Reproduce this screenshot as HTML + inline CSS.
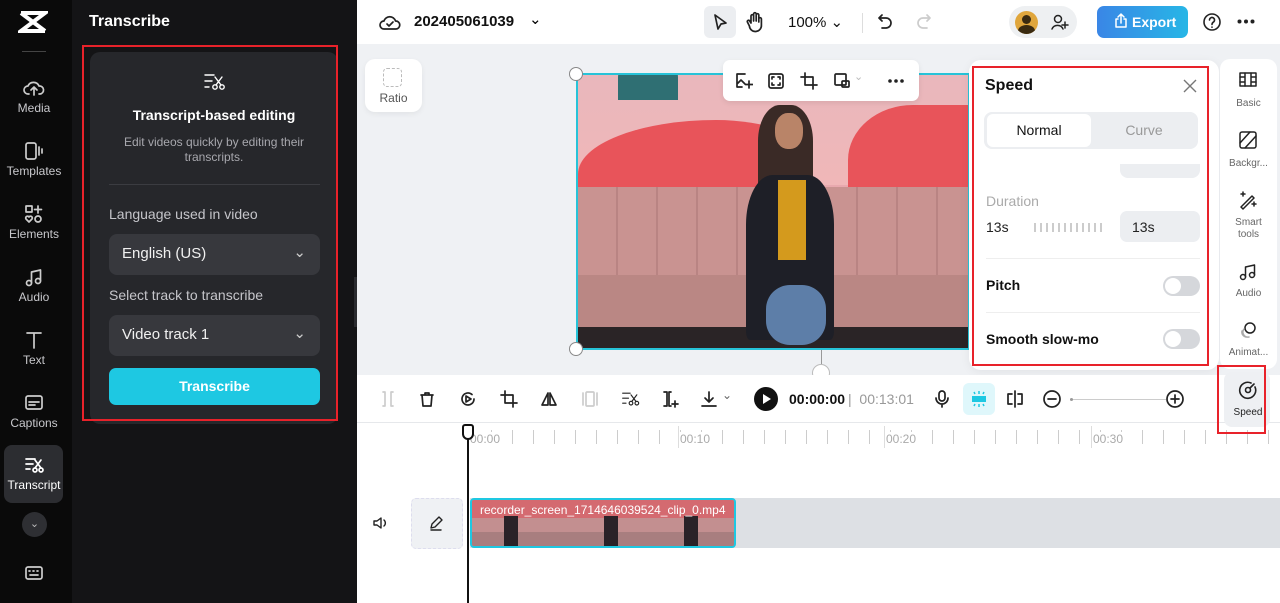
<!DOCTYPE html>
<html><head><meta charset="utf-8"><style>
*{box-sizing:border-box;margin:0;padding:0}
body{width:1280px;height:603px;overflow:hidden;font-family:"Liberation Sans",sans-serif;background:#fff;position:relative}
.abs{position:absolute}
.nav{left:0;top:0;width:72px;height:603px;background:#0a0a0a}
.ni{position:absolute;left:0;width:68px;text-align:center;color:#c8c8cc;font-size:12px}
.ni svg{display:block;margin:0 auto 3px}
.panel{left:72px;top:0;width:285px;height:603px;background:#141416}
.card{left:90px;top:52px;width:248px;height:372px;background:#26272b;border-radius:10px}
.sel{position:absolute;left:19px;width:211px;height:41px;background:#37383d;border-radius:8px;color:#f0f0f0;font-size:15px;padding:11px 13px}
.lbl{position:absolute;left:19px;color:#c5c5ca;font-size:14px}
.top{left:357px;top:0;width:923px;height:44px;background:#fff}
.canvas{left:357px;top:44px;width:923px;height:331px;background:#eff1f4}
.tb{left:357px;top:375px;width:923px;height:48px;background:#fff;border-bottom:1px solid #e6e8eb}
.ic{stroke:#222;fill:none;stroke-width:1.7;stroke-linecap:round;stroke-linejoin:round}
.red{position:absolute;border:2px solid #e8222a;z-index:5}
</style></head><body>
<div class="abs nav">
 <svg class="abs" style="left:18px;top:10px" width="30" height="24" viewBox="0 0 30 24"><path d="M3 3h24L3 21h24" stroke="#fff" stroke-width="4" fill="none"/><path d="M3 3L27 21" stroke="#fff" stroke-width="4"/></svg>
 <div class="abs" style="left:22px;top:51px;width:24px;height:1px;background:#444"></div>
 <div class="ni" style="top:78px"><svg width="22" height="20" viewBox="0 0 22 20" class="ic" style="stroke:#ccc"><path d="M6 16H5a4 4 0 010-8 6 6 0 0111 0 4 4 0 011 8h-1M11 17V9M8 12l3-3 3 3"/></svg>Media</div>
 <div class="ni" style="top:141px"><svg width="22" height="20" viewBox="0 0 22 20" class="ic" style="stroke:#ccc"><rect x="3" y="2" width="10" height="16" rx="2"/><path d="M16 6v8M19 8v4"/></svg>Templates</div>
 <div class="ni" style="top:204px"><svg width="22" height="20" viewBox="0 0 22 20" class="ic" style="stroke:#ccc"><rect x="3" y="2" width="6" height="6"/><path d="M15 2v7M11.5 5.5h7"/><circle cx="15" cy="15" r="3"/><path d="M6 18l-3-3a1.8 1.8 0 013-2 1.8 1.8 0 013 2z"/></svg>Elements</div>
 <div class="ni" style="top:267px"><svg width="22" height="20" viewBox="0 0 22 20" class="ic" style="stroke:#ccc"><circle cx="6" cy="16" r="2.5"/><circle cx="15" cy="14" r="2.5"/><path d="M8.5 16V5l9-2v11"/></svg>Audio</div>
 <div class="ni" style="top:330px"><svg width="22" height="20" viewBox="0 0 22 20" class="ic" style="stroke:#ccc"><path d="M4 3h14M11 3v15"/></svg>Text</div>
 <div class="ni" style="top:393px"><svg width="22" height="20" viewBox="0 0 22 20" class="ic" style="stroke:#ccc"><rect x="3" y="3" width="16" height="13" rx="2"/><path d="M6 9h10M6 12h6"/></svg>Captions</div>
 <div class="abs" style="left:4px;top:445px;width:59px;height:58px;background:#2c2d31;border-radius:8px"></div>
 <div class="ni" style="top:455px;color:#fff"><svg width="22" height="20" viewBox="0 0 22 20" class="ic" style="stroke:#fff"><path d="M3 4h9M3 9h7M3 14h4"/><circle cx="12" cy="15" r="2"/><circle cx="18" cy="15" r="2"/><path d="M12 5l6 8M18 5l-6 8"/></svg>Transcript</div>
 <div class="abs" style="left:22px;top:512px;width:25px;height:25px;border-radius:50%;background:#2e2f33;color:#bbb;font-size:11px;text-align:center;line-height:25px">⌄</div>
 <svg class="abs ic" style="left:24px;top:564px;stroke:#ccc" width="20" height="18" viewBox="0 0 20 18"><rect x="2" y="3" width="16" height="12" rx="2"/><path d="M5 7h1M9 7h1M13 7h1M6 11h8"/></svg>
</div>
<div class="abs panel">
 <div class="abs" style="left:17px;top:13px;color:#fff;font-size:16px;font-weight:bold">Transcribe</div>
</div>
<div class="abs card">
 <svg class="abs ic" style="left:113px;top:20px;stroke:#fff;stroke-width:1.4" width="24" height="20" viewBox="0 0 24 20"><path d="M2 3h9M2 9h7M2 15h4"/><circle cx="12" cy="15" r="2.2"/><circle cx="19" cy="15" r="2.2"/><path d="M12 5l6 8M19 5l-6 8"/></svg>
 <div class="abs" style="left:0;width:248px;top:55px;text-align:center;color:#fff;font-weight:bold;font-size:14px">Transcript-based editing</div>
 <div class="abs" style="left:20px;width:208px;top:83px;text-align:center;color:#a8a8ae;font-size:12px;line-height:15px">Edit videos quickly by editing their transcripts.</div>
 <div class="abs" style="left:19px;top:132px;width:211px;height:1px;background:#3b3c41"></div>
 <div class="lbl" style="top:154px">Language used in video</div>
 <div class="sel" style="top:182px">English (US)<span style="position:absolute;right:14px;top:9px;color:#ccc">⌄</span></div>
 <div class="lbl" style="top:235px">Select track to transcribe</div>
 <div class="sel" style="top:263px">Video track 1<span style="position:absolute;right:14px;top:9px;color:#ccc">⌄</span></div>
 <div class="abs" style="left:19px;top:316px;width:211px;height:37px;background:#1ec8e2;border-radius:7px;color:#fff;font-weight:bold;font-size:14px;text-align:center;line-height:37px">Transcribe</div>
</div>
<div class="red" style="left:82px;top:45px;width:256px;height:376px"></div>
<div class="abs" style="left:354px;top:277px;width:9px;height:50px;background:#2a2b2f;border-radius:0 5px 5px 0"></div>

<div class="abs top">
 <svg class="abs ic" style="left:22px;top:12px" width="22" height="20" viewBox="0 0 22 20"><path d="M6 17H5a4 4 0 010-8 6 6 0 0111.5 0 4 4 0 01.5 8H6z"/><path d="M8 12l2 2 4-4"/></svg>
 <div class="abs" style="left:57px;top:13px;font-size:15px;font-weight:bold;color:#111">202405061039</div>
 <div class="abs" style="left:172px;top:10px;font-size:15px">⌄</div>
 <div class="abs" style="left:347px;top:6px;width:32px;height:32px;background:#eceef1;border-radius:6px"></div>
 <svg class="abs ic" style="left:354px;top:12px" width="18" height="20" viewBox="0 0 18 20"><path d="M4 3l11 8-5 1-3 5z"/></svg>
 <svg class="abs ic" style="left:388px;top:11px" width="20" height="22" viewBox="0 0 20 22"><path d="M6 12V5a1.3 1.3 0 012.6 0v5V3a1.3 1.3 0 012.6 0v7V4a1.3 1.3 0 012.6 0v7-3a1.3 1.3 0 012.6 0v6a6 6 0 01-12 1l-2-4a1.3 1.3 0 012-1.5z"/></svg>
 <div class="abs" style="left:431px;top:13px;font-size:15px;color:#111">100% ⌄</div>
 <div class="abs" style="left:505px;top:13px;width:1px;height:20px;background:#ddd"></div>
 <svg class="abs ic" style="left:519px;top:12px" width="18" height="20" viewBox="0 0 18 20"><path d="M6 3L3 6l3 3M3 6h7a5 5 0 010 10H6"/></svg>
 <svg class="abs ic" style="left:558px;top:12px;stroke:#ccc" width="18" height="20" viewBox="0 0 18 20"><path d="M12 3l3 3-3 3M15 6H8a5 5 0 000 10h4"/></svg>
 <div class="abs" style="left:652px;top:6px;width:68px;height:32px;background:#eef0f2;border-radius:16px"></div>
 <div class="abs" style="left:658px;top:11px;width:23px;height:23px;background:#e0a63c;border-radius:50%;overflow:hidden"><div style="position:absolute;left:7px;top:4px;width:9px;height:9px;border-radius:50%;background:#3a2a10"></div><div style="position:absolute;left:3px;top:14px;width:17px;height:12px;border-radius:50%;background:#3a2a10"></div></div>
 <svg class="abs ic" style="left:694px;top:12px;stroke-width:1.5" width="18" height="20" viewBox="0 0 18 20"><circle cx="7" cy="7" r="3.5"/><path d="M1 17a6 6 0 0111 0M14 10v6M11 13h6"/></svg>
 <div class="abs" style="left:740px;top:6px;width:91px;height:32px;background:linear-gradient(90deg,#3a86e6,#27b6e6);border-radius:7px;color:#fff;font-weight:bold;font-size:14px;line-height:32px;padding-left:35px">Export</div>
 <svg class="abs ic" style="left:756px;top:13px;stroke:#fff;stroke-width:1.5" width="16" height="16" viewBox="0 0 16 16"><path d="M5 6H3v8h10V6h-2M8 10V2M5 4l3-3 3 3"/></svg>
 <svg class="abs ic" style="left:845px;top:12px;stroke-width:1.6" width="20" height="20" viewBox="0 0 20 20"><circle cx="10" cy="10" r="8"/><path d="M7.5 8a2.5 2.5 0 114 2c-1 .7-1.5 1-1.5 2.5M10 15v.2"/></svg>
 <svg class="abs" style="left:880px;top:19px" width="18" height="5" viewBox="0 0 18 5"><circle cx="2.5" cy="2.5" r="2" fill="#222"/><circle cx="9" cy="2.5" r="2" fill="#222"/><circle cx="15.5" cy="2.5" r="2" fill="#222"/></svg>
</div>

<div class="abs canvas">
 <div class="abs" style="left:8px;top:15px;width:57px;height:53px;background:#fff;border-radius:10px;box-shadow:0 2px 6px rgba(0,0,0,.06)"></div>
 <div class="abs" style="left:26px;top:24px;width:19px;height:19px;border:1.5px dashed #bbb;border-radius:4px"></div>
 <div class="abs" style="left:8px;top:47px;width:57px;text-align:center;font-size:12px;color:#555">Ratio</div>
 <!-- video -->
 <div class="abs" style="left:219px;top:29px;width:394px;height:277px;border:2px solid #27c3d8;overflow:hidden;background:#e8a9ae">
  <div class="abs" style="left:0;top:0;width:394px;height:110px;background:linear-gradient(180deg,#e9b7bc,#f0b7b8)"></div>
  <div class="abs" style="left:40px;top:-20px;width:60px;height:45px;border-radius:50% 50% 0 0;background:#2f6f73"></div>
  <div class="abs" style="left:0;top:45px;width:230px;height:90px;background:#e8545a;border-radius:60% 40% 0 0"></div>
  <div class="abs" style="left:270px;top:30px;width:130px;height:110px;background:#e8545a;border-radius:50% 0 0 0"></div>
  <div class="abs" style="left:0;top:112px;width:394px;height:120px;background:repeating-linear-gradient(90deg,#c99391 0 38px,#b98483 38px 40px)"></div>
  <div class="abs" style="left:0;top:200px;width:394px;height:80px;background:#ba8784"></div>
  <div class="abs" style="left:0;top:252px;width:394px;height:30px;background:#2a2426"></div>
  <div class="abs" style="left:180px;top:30px;width:55px;height:90px;background:#3a2a26;border-radius:40% 40% 10% 10%"></div>
  <div class="abs" style="left:197px;top:38px;width:28px;height:36px;background:#b98468;border-radius:45%"></div>
  <div class="abs" style="left:168px;top:100px;width:88px;height:165px;background:#1e1f27;border-radius:30% 30% 5% 5%"></div>
  <div class="abs" style="left:200px;top:105px;width:28px;height:80px;background:#d49a1d"></div>
  <div class="abs" style="left:188px;top:210px;width:60px;height:60px;background:#5d7ea8;border-radius:40%"></div>
 </div>
 <div class="abs" style="left:212px;top:23px;width:14px;height:14px;border-radius:50%;background:#fff;border:1px solid #888"></div>
 <div class="abs" style="left:212px;top:298px;width:14px;height:14px;border-radius:50%;background:#fff;border:1px solid #888"></div>
 <div class="abs" style="left:366px;top:16px;width:196px;height:41px;background:#fff;border-radius:7px;box-shadow:0 2px 6px rgba(0,0,0,.08)"></div>
 <svg class="abs ic" style="left:378px;top:28px" width="18" height="18" viewBox="0 0 18 18"><path d="M10 2H2v13h5M2 12l4-4 4 4"/><path d="M14 9v7M10.5 12.5h7"/></svg>
 <svg class="abs ic" style="left:410px;top:28px" width="18" height="18" viewBox="0 0 18 18"><rect x="2" y="2" width="14" height="14" rx="2"/><path d="M5 7V5h2M11 5h2v2M13 11v2h-2M7 13H5v-2"/></svg>
 <svg class="abs ic" style="left:443px;top:28px" width="18" height="18" viewBox="0 0 18 18"><path d="M5 1v12h12M1 5h12v12"/></svg>
 <svg class="abs ic" style="left:476px;top:28px" width="18" height="18" viewBox="0 0 18 18"><rect x="2" y="2" width="11" height="11" rx="1"/><rect x="9" y="9" width="7" height="6" rx="1"/></svg>
 <div class="abs" style="left:497px;top:26px;color:#bbb;font-size:11px">⌄</div>
 <svg class="abs" style="left:531px;top:35px" width="16" height="4" viewBox="0 0 16 4"><circle cx="2" cy="2" r="1.8" fill="#222"/><circle cx="8" cy="2" r="1.8" fill="#222"/><circle cx="14" cy="2" r="1.8" fill="#222"/></svg>
 <div class="abs" style="left:464px;top:306px;width:1px;height:14px;background:#999"></div>
 <div class="abs" style="left:455px;top:320px;width:18px;height:18px;border-radius:50%;background:#fff;border:1px solid #bbb"></div>
 <!-- speed panel -->
 <div class="abs" style="left:612px;top:16px;width:250px;height:310px;background:#fff;border-radius:12px;box-shadow:0 2px 10px rgba(0,0,0,.06)"></div>
 <div class="red" style="left:615px;top:22px;width:237px;height:300px"></div>
 <div class="abs" style="left:628px;top:33px;font-size:16px;font-weight:bold;color:#111">Speed</div>
 <svg class="abs" style="left:826px;top:35px" width="14" height="14" viewBox="0 0 14 14"><path d="M1 1l12 12M13 1L1 13" stroke="#777" stroke-width="1.4"/></svg>
 <div class="abs" style="left:627px;top:68px;width:214px;height:37px;background:#eceef1;border-radius:8px"></div>
 <div class="abs" style="left:630px;top:70px;width:104px;height:33px;background:#fff;border-radius:6px;text-align:center;line-height:33px;font-size:14px;color:#111">Normal</div>
 <div class="abs" style="left:735px;top:70px;width:104px;height:33px;text-align:center;line-height:33px;font-size:14px;color:#999">Curve</div>
 <div class="abs" style="left:763px;top:120px;width:80px;height:14px;background:#eceef1;border-radius:0 0 8px 8px"></div>
 <div class="abs" style="left:629px;top:149px;font-size:14px;color:#aaa">Duration</div>
 <div class="abs" style="left:629px;top:175px;font-size:14px;color:#222">13s</div>
 <div class="abs" style="left:677px;top:179px;width:68px;height:9px;background:repeating-linear-gradient(90deg,#ccc 0 2px,transparent 2px 6px)"></div>
 <div class="abs" style="left:763px;top:167px;width:80px;height:31px;background:#eceef1;border-radius:7px;font-size:14px;padding:8px 12px;color:#222">13s</div>
 <div class="abs" style="left:629px;top:214px;width:214px;height:1px;background:#eee"></div>
 <div class="abs" style="left:629px;top:233px;font-size:14px;font-weight:bold;color:#111">Pitch</div>
 <div class="abs" style="left:806px;top:232px;width:37px;height:20px;background:#d5d7db;border-radius:10px"><div style="position:absolute;left:2px;top:2px;width:16px;height:16px;background:#fff;border-radius:50%"></div></div>
 <div class="abs" style="left:629px;top:268px;width:214px;height:1px;background:#eee"></div>
 <div class="abs" style="left:629px;top:287px;font-size:14px;font-weight:bold;color:#111">Smooth slow-mo</div>
 <div class="abs" style="left:806px;top:285px;width:37px;height:20px;background:#d5d7db;border-radius:10px"><div style="position:absolute;left:2px;top:2px;width:16px;height:16px;background:#fff;border-radius:50%"></div></div>
 <!-- right tabs -->
 <div class="abs" style="left:863px;top:15px;width:57px;height:310px;background:#fff;border-radius:10px"></div>
 <svg class="abs ic" style="left:881px;top:27px;stroke-width:1.5" width="20" height="18" viewBox="0 0 20 18"><rect x="2" y="2" width="16" height="13"/><path d="M7 2v13M13 2v13M2 6h5M2 11h5M13 6h5M13 11h5"/></svg>
 <div class="abs" style="left:863px;top:54px;width:57px;text-align:center;font-size:10px;color:#666">Basic</div>
 <svg class="abs ic" style="left:881px;top:87px;stroke-width:1.5" width="20" height="18" viewBox="0 0 20 18"><rect x="2" y="1" width="16" height="16" rx="2"/><path d="M2 12l10-11M7 17L18 5"/></svg>
 <div class="abs" style="left:863px;top:114px;width:57px;text-align:center;font-size:10px;color:#666">Backgr...</div>
 <svg class="abs ic" style="left:881px;top:146px;stroke-width:1.5" width="20" height="20" viewBox="0 0 20 20"><path d="M3 17L14 6l2 2L5 19zM5 2v4M3 4h4M16 12v4M14 14h4"/></svg>
 <div class="abs" style="left:863px;top:173px;width:57px;text-align:center;font-size:10px;color:#666;line-height:12px">Smart<br>tools</div>
 <svg class="abs ic" style="left:881px;top:218px;stroke-width:1.5" width="20" height="20" viewBox="0 0 20 20"><circle cx="5" cy="15" r="2.5"/><circle cx="14" cy="13" r="2.5"/><path d="M7.5 15V5l9-2v10"/></svg>
 <div class="abs" style="left:863px;top:244px;width:57px;text-align:center;font-size:10px;color:#666">Audio</div>
 <svg class="abs ic" style="left:881px;top:276px;stroke-width:1.5" width="20" height="20" viewBox="0 0 20 20"><circle cx="12" cy="8" r="5"/><path d="M6 9a5 5 0 005 8M4 11a5 5 0 004 6" stroke="#aaa"/></svg>
 <div class="abs" style="left:863px;top:303px;width:57px;text-align:center;font-size:10px;color:#666">Animat...</div>
</div>

<div class="abs tb">
 <svg class="abs ic" style="left:22px;top:15px;stroke:#ccc" width="18" height="18" viewBox="0 0 18 18"><path d="M4 2h2v14H4M14 2h-2v14h2"/></svg>
 <svg class="abs ic" style="left:61px;top:15px" width="18" height="18" viewBox="0 0 18 18"><path d="M3 5h12M7 5V3h4v2M4 5l1 11h8l1-11"/></svg>
 <svg class="abs ic" style="left:102px;top:15px" width="18" height="18" viewBox="0 0 18 18"><path d="M15 9a6 6 0 11-2-4.5"/><path d="M7 6l5 3-5 3z"/></svg>
 <svg class="abs ic" style="left:143px;top:15px" width="18" height="18" viewBox="0 0 18 18"><path d="M5 1v12h12M1 5h12v12"/></svg>
 <svg class="abs ic" style="left:183px;top:15px" width="18" height="18" viewBox="0 0 18 18"><path d="M8 3L2 15h6zM10 3l6 12h-6z"/></svg>
 <svg class="abs ic" style="left:224px;top:15px;stroke:#ccc" width="18" height="18" viewBox="0 0 18 18"><rect x="5" y="2" width="8" height="14" rx="1"/><path d="M2 3v12M16 3v12"/></svg>
 <svg class="abs ic" style="left:264px;top:15px;stroke-width:1.4" width="20" height="18" viewBox="0 0 24 20"><path d="M2 3h9M2 9h7M2 15h4"/><circle cx="12" cy="15" r="2.2"/><circle cx="19" cy="15" r="2.2"/><path d="M12 5l6 8M19 5l-6 8"/></svg>
 <svg class="abs ic" style="left:304px;top:15px" width="18" height="18" viewBox="0 0 18 18"><path d="M3 2h3v14H3M10 2h-2v14h2M14 11v6M11 14h6"/></svg>
 <svg class="abs ic" style="left:343px;top:15px" width="18" height="18" viewBox="0 0 18 18"><path d="M9 2v10M5 8l4 4 4-4M2 16h14"/></svg>
 <div class="abs" style="left:365px;top:13px;font-size:12px;color:#666">⌄</div>
 <div class="abs" style="left:397px;top:12px;width:24px;height:24px;border-radius:50%;background:#111"></div>
 <div class="abs" style="left:406px;top:19px;width:0;height:0;border-left:8px solid #fff;border-top:5px solid transparent;border-bottom:5px solid transparent"></div>
 <div class="abs" style="left:432px;top:16px;font-size:14px;font-weight:bold;color:#111">00:00:00</div>
 <div class="abs" style="left:491px;top:16px;font-size:14px;color:#999">|&nbsp; 00:13:01</div>
 <svg class="abs ic" style="left:576px;top:14px" width="18" height="20" viewBox="0 0 18 20"><rect x="6" y="2" width="6" height="10" rx="3"/><path d="M3 9a6 6 0 0012 0M9 15v3"/></svg>
 <div class="abs" style="left:606px;top:8px;width:32px;height:32px;background:#dff7fb;border-radius:6px"></div>
 <svg class="abs" style="left:612px;top:14px" width="20" height="20" viewBox="0 0 20 20"><rect x="3" y="7" width="14" height="6" fill="#1ec8e2"/><path d="M10 2v3M10 15v3M5 3l1 2M15 3l-1 2M5 17l1-2M15 17l-1-2" stroke="#1ec8e2" stroke-width="1.5"/></svg>
 <svg class="abs ic" style="left:648px;top:15px" width="20" height="18" viewBox="0 0 20 18"><path d="M10 1v16M7 4H3v10h4M13 4h4v10h-4"/></svg>
 <svg class="abs ic" style="left:685px;top:14px" width="20" height="20" viewBox="0 0 20 20"><circle cx="10" cy="10" r="8"/><path d="M6 10h8"/></svg>
 <div class="abs" style="left:713px;top:24px;width:96px;height:1px;background:#ccc"></div>
 <div class="abs" style="left:713px;top:23px;width:3px;height:3px;background:#999;border-radius:50%"></div>
 <svg class="abs ic" style="left:808px;top:14px" width="20" height="20" viewBox="0 0 20 20"><circle cx="10" cy="10" r="8"/><path d="M6 10h8M10 6v8"/></svg>
</div>
<!-- speed tab on right -->
<div class="abs" style="left:1224px;top:372px;width:46px;height:55px;background:#eef0f3;border-radius:8px"></div>
<div class="red" style="left:1217px;top:365px;width:49px;height:69px"></div>
<svg class="abs ic" style="left:1238px;top:380px;stroke-width:1.6" width="20" height="20" viewBox="0 0 20 20"><path d="M17 7a8 8 0 11-4-4"/><circle cx="10" cy="10" r="2.5"/><path d="M12 8l4-4"/></svg>
<div class="abs" style="left:1220px;top:407px;width:56px;text-align:center;font-size:10px;color:#222">Speed</div>

<!-- timeline -->
<div class="abs" style="left:470px;top:430px;width:810px;height:14px;background:repeating-linear-gradient(90deg,#ccc 0 1px,transparent 1px 21px)"></div>
<div class="abs" style="left:470px;top:432px;font-size:12px;color:#aaa;background:#fff">00:00</div>
<div class="abs" style="left:678px;top:426px;width:1px;height:22px;background:#ddd"></div><div class="abs" style="left:680px;top:432px;font-size:12px;color:#aaa;background:#fff">00:10</div>
<div class="abs" style="left:884px;top:426px;width:1px;height:22px;background:#ddd"></div><div class="abs" style="left:886px;top:432px;font-size:12px;color:#aaa;background:#fff">00:20</div>
<div class="abs" style="left:1091px;top:426px;width:1px;height:22px;background:#ddd"></div><div class="abs" style="left:1093px;top:432px;font-size:12px;color:#aaa;background:#fff">00:30</div>
<svg class="abs ic" style="left:372px;top:515px;stroke-width:1.4" width="18" height="16" viewBox="0 0 18 16"><path d="M2 6h3l4-3v10l-4-3H2zM12 5a4 4 0 010 6"/></svg>
<div class="abs" style="left:411px;top:498px;width:52px;height:51px;background:#eff1f4;border-radius:5px;border:1px dashed #dde"></div>
<svg class="abs ic" style="left:428px;top:515px;stroke-width:1.4" width="16" height="16" viewBox="0 0 16 16"><path d="M3 13l1-4 7-7 3 3-7 7zM3 15h10"/></svg>
<div class="abs" style="left:470px;top:498px;width:810px;height:50px;background:#dde0e4"></div>
<div class="abs" style="left:470px;top:498px;width:266px;height:50px;border:2px solid #1ec8e2;border-radius:4px;overflow:hidden;background:#c38f90">
 <div class="abs" style="left:0;top:0;width:266px;height:18px;background:#d46a70"></div>
 <div class="abs" style="left:0;top:32px;width:266px;height:16px;background:#a87e7f"></div>
 <div class="abs" style="left:32px;top:16px;width:14px;height:30px;background:#2a2228"></div>
 <div class="abs" style="left:132px;top:16px;width:14px;height:30px;background:#2a2228"></div>
 <div class="abs" style="left:212px;top:16px;width:14px;height:30px;background:#2a2228"></div>
 <div class="abs" style="left:8px;top:3px;font-size:12px;color:#fff;white-space:nowrap">recorder_screen_1714646039524_clip_0.mp4</div>
</div>
<div class="abs" style="left:467px;top:425px;width:2px;height:178px;background:#111"></div>
<div class="abs" style="left:462px;top:424px;width:12px;height:16px;border:2px solid #111;border-radius:3px 3px 6px 6px;background:#fff"></div>
</body></html>
